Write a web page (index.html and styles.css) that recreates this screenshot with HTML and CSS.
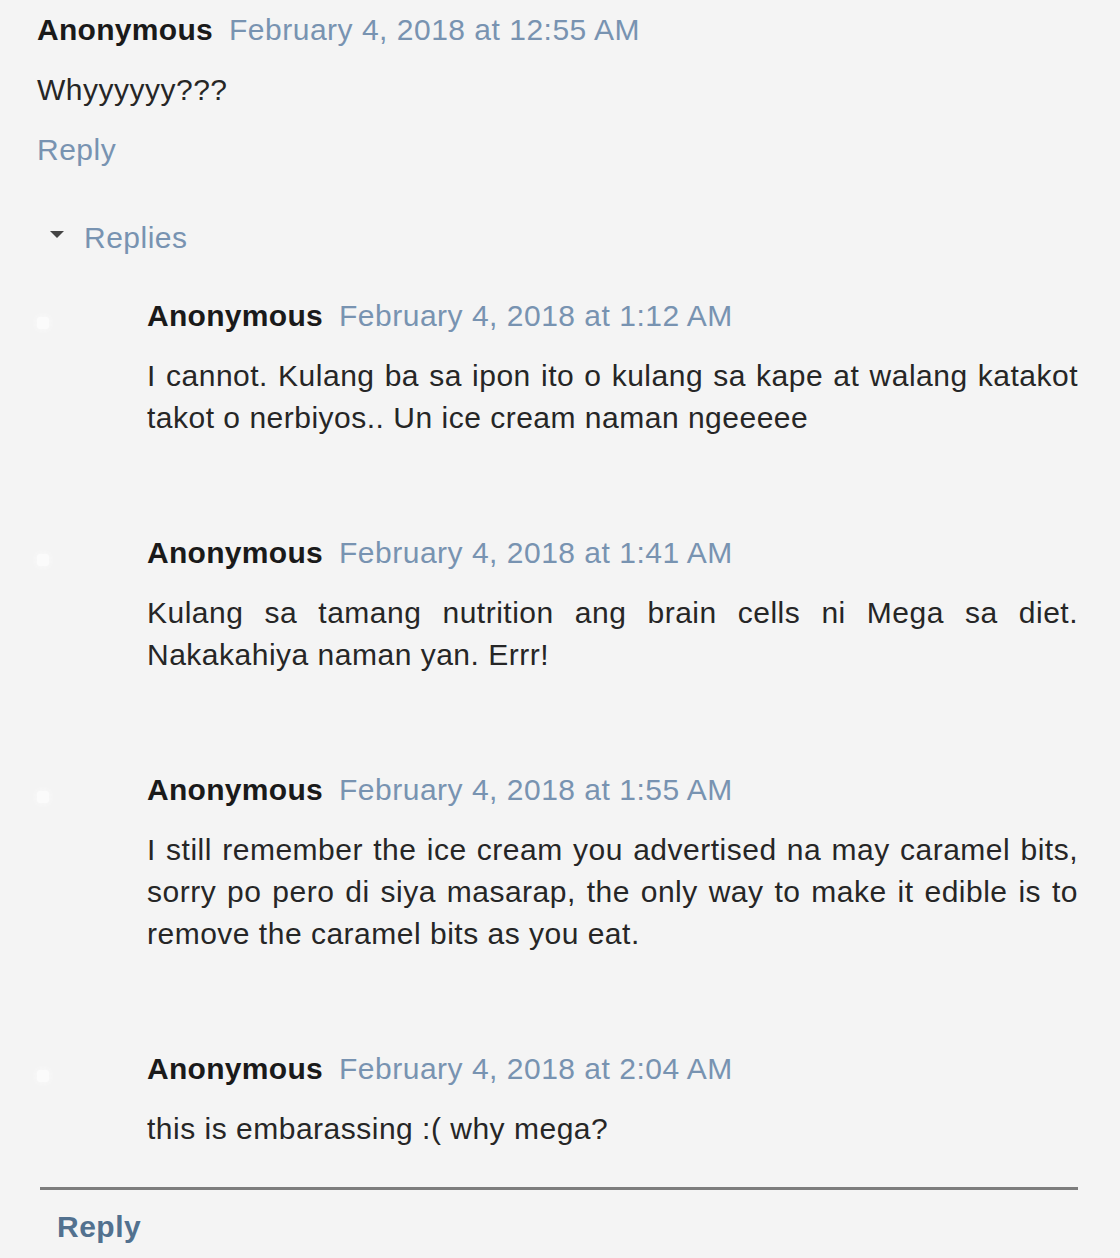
FILE: index.html
```html
<!DOCTYPE html>
<html lang="en">

<head>
    <meta charset="UTF-8">
    <meta name="viewport" content="width=device-width, initial-scale=1.0">
    <title>Comments</title>
    <link rel="stylesheet" href="styles.css">
</head>

<body>
    <div class="comment-thread">
        <div class="comment">
            <div class="comment-header">
                <span class="user">Anonymous</span>
                <a class="date" href="#">February 4, 2018 at 12:55 AM</a>
            </div>
            <p class="comment-body">Whyyyyyy???</p>
            <a class="reply-link" href="#">Reply</a>
        </div>

        <div class="replies-toggle">
            <span class="arrow"></span>
            <a href="#">Replies</a>
        </div>

        <div class="replies">
            <div class="reply">
                <div class="avatar"></div>
                <div class="reply-content">
                    <div class="comment-header">
                        <span class="user">Anonymous</span>
                        <a class="date" href="#">February 4, 2018 at 1:12 AM</a>
                    </div>
                    <p class="comment-body">I cannot. Kulang ba sa ipon ito o kulang sa kape at walang katakot takot o nerbiyos.. Un ice cream naman ngeeeee</p>
                </div>
            </div>

            <div class="reply">
                <div class="avatar"></div>
                <div class="reply-content">
                    <div class="comment-header">
                        <span class="user">Anonymous</span>
                        <a class="date" href="#">February 4, 2018 at 1:41 AM</a>
                    </div>
                    <p class="comment-body">Kulang sa tamang nutrition ang brain cells ni Mega sa diet. Nakakahiya naman yan. Errr!</p>
                </div>
            </div>

            <div class="reply">
                <div class="avatar"></div>
                <div class="reply-content">
                    <div class="comment-header">
                        <span class="user">Anonymous</span>
                        <a class="date" href="#">February 4, 2018 at 1:55 AM</a>
                    </div>
                    <p class="comment-body">I still remember the ice cream you advertised na may caramel bits, sorry po pero di siya masarap, the only way to make it edible is to remove the caramel bits as you eat.</p>
                </div>
            </div>

            <div class="reply">
                <div class="avatar"></div>
                <div class="reply-content">
                    <div class="comment-header">
                        <span class="user">Anonymous</span>
                        <a class="date" href="#">February 4, 2018 at 2:04 AM</a>
                    </div>
                    <p class="comment-body">this is embarassing :( why mega?</p>
                </div>
            </div>
        </div>

        <div class="thread-footer">
            <a class="reply-link bold" href="#">Reply</a>
        </div>
    </div>
</body>

</html>
```

FILE: styles.css
```css
body {
    margin: 0;
    background-color: #f4f4f4;
    color: #262626;
    font-family: "Liberation Sans", Arial, sans-serif;
    font-size: 30px;
    line-height: 42px;
    letter-spacing: 0.5px;
}

a {
    color: #7893b1;
    text-decoration: none;
}

.comment-thread {
    width: 1041px;
    padding: 9px 0 0 37px;
}

.comment-header {
    display: flex;
    gap: 16px;
    white-space: nowrap;
}

.user {
    font-weight: bold;
    color: #1a1a1a;
    letter-spacing: 0.3px;
}

.comment-body {
    margin: 18px 0 0;
    text-align: justify;
}

.reply-link {
    display: inline-block;
    margin-top: 18px;
}

.reply-link.bold {
    margin-top: 0;
    font-weight: bold;
    color: #52718f;
}

/* Ссылка Replies со стрелкой */
.replies-toggle {
    display: flex;
    align-items: center;
    margin-top: 46px;
    padding-left: 13px;
}

.arrow {
    width: 0;
    height: 0;
    border-left: 7px solid transparent;
    border-right: 7px solid transparent;
    border-top: 7px solid #444;
    margin-right: 20px;
    margin-top: -8px;
}

.replies {
    margin-top: 36px;
    display: flex;
    flex-direction: column;
    gap: 93px;
}

.reply {
    display: flex;
    align-items: flex-start;
}

.avatar {
    width: 12px;
    height: 12px;
    margin-top: 22px;
    margin-right: 98px;
    border-radius: 3px;
    background-color: #fbfbfb;
    box-shadow: 0 0 6px #fbfbfb;
}

.reply-content {
    flex: 1;
}

.thread-footer {
    margin-top: 37px;
    margin-left: 3px;
    border-top: 3px solid #7d7d7d;
    padding: 16px 0 0 17px;
}
```
